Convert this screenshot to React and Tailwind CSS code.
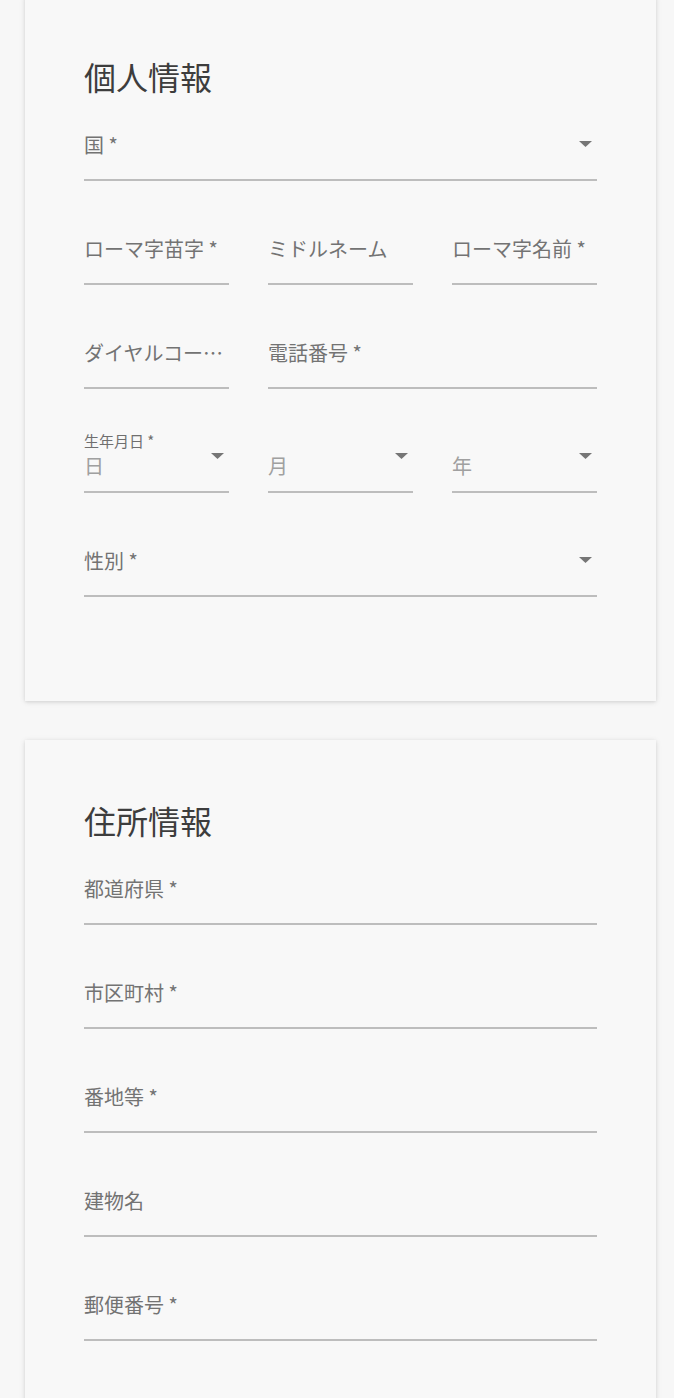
import React from "react";

const FONT = { fontFamily: '"Noto Sans CJK JP", "Noto Sans", sans-serif' };

function Arrow() {
  return (
    <svg
      className="absolute right-[5px] bottom-[32px]"
      width="13"
      height="6"
      viewBox="0 0 13 6"
    >
      <path d="M0 0 L13 0 L6.5 6 Z" fill="#767676" />
    </svg>
  );
}

function Field({ label, select = false, truncate = false, className = "" }) {
  return (
    <div className={"relative h-[72px] pt-[21px] border-b-2 border-[#bdbdbd] " + className}>
      <div
        className={
          "h-[30px] leading-[30px] text-[20px] text-[#737373] whitespace-nowrap " +
          (truncate ? "overflow-hidden text-ellipsis" : "")
        }
      >
        {label}
      </div>
      {select && <Arrow />}
    </div>
  );
}

function DateField({ top, value }) {
  return (
    <div className="relative h-[72px] pt-[9px] border-b-2 border-[#bdbdbd]">
      <div className="h-[21px] leading-[21px] text-[15px] text-[#6f6f6f] whitespace-nowrap">{top}</div>
      <div className="h-[30px] leading-[30px] text-[20px] text-[#a0a0a0]">{value}</div>
      <Arrow />
    </div>
  );
}

function Card({ title, children }) {
  return (
    <div className="w-[631px] bg-[#f8f8f8] px-[59px] pt-[58px] pb-[104px] shadow-[0_1px_6px_rgba(0,0,0,0.10),0_1px_3px_rgba(0,0,0,0.08)]">
      <h2 className="h-[44px] leading-[44px] text-[32px] text-[#3d3d3d] font-normal mb-[11px]">
        {title}
      </h2>
      <div className="flex flex-col gap-[32px]">{children}</div>
    </div>
  );
}

export default function App() {
  return (
    <div className="min-h-screen bg-[#f7f7f7] pl-[25px] overflow-hidden" style={FONT}>
      <div className="flex flex-col gap-[39px] -mt-[4px]">
        <Card title="個人情報">
          <Field label="国 *" select />
          <div className="grid grid-cols-3 gap-x-[39px]">
            <Field label="ローマ字苗字 *" />
            <Field label="ミドルネーム" />
            <Field label="ローマ字名前 *" />
          </div>
          <div className="grid grid-cols-3 gap-x-[39px]">
            <Field label="ダイヤルコード *" truncate />
            <Field label="電話番号 *" className="col-span-2" />
          </div>
          <div className="grid grid-cols-3 gap-x-[39px]">
            <DateField top="生年月日 *" value="日" />
            <DateField top={"\u00a0"} value="月" />
            <DateField top={"\u00a0"} value="年" />
          </div>
          <Field label="性別 *" select />
        </Card>
        <Card title="住所情報">
          <Field label="都道府県 *" />
          <Field label="市区町村 *" />
          <Field label="番地等 *" />
          <Field label="建物名" />
          <Field label="郵便番号 *" />
        </Card>
      </div>
    </div>
  );
}
